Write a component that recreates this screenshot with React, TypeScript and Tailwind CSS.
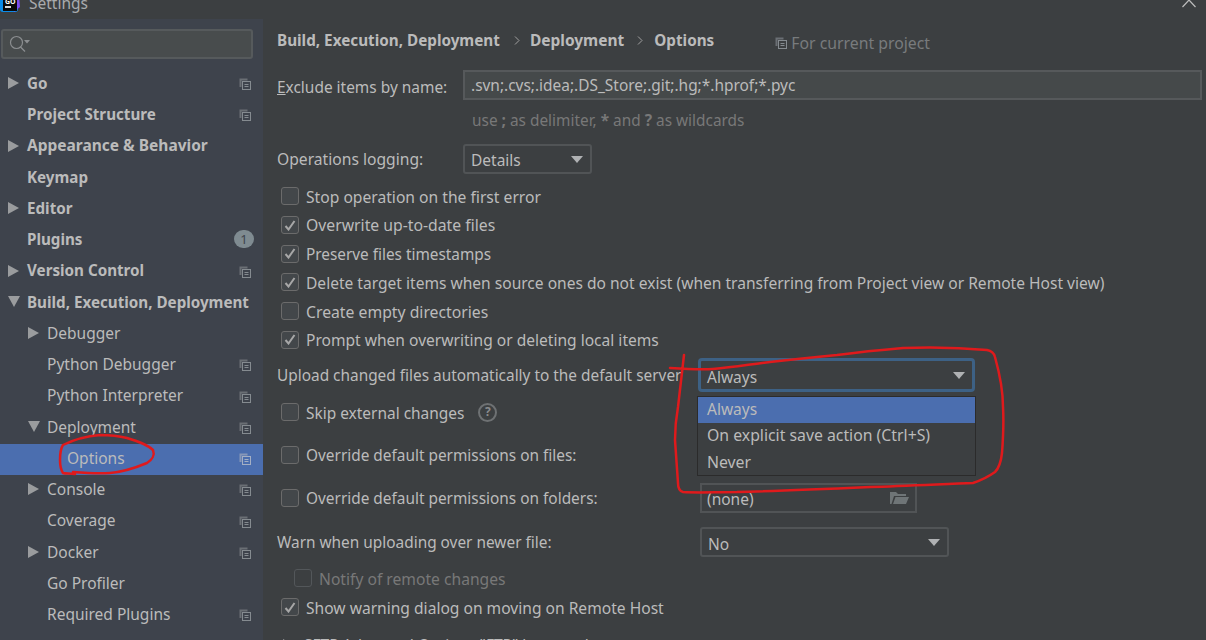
import React from "react";

const Copy = ({ light = false }: { light?: boolean }) => (
  <svg width="12" height="12" viewBox="0 0 12 12" className="shrink-0" fill="none" stroke={light ? "#a4afc4" : "#858b90"} strokeWidth="1">
    <path d="M0.5 0.5H8.5V2.5H2.5V9H0.5Z" fill={light ? "#8797b8" : "#6a6f74"} stroke="none" />
    <rect x="3.5" y="3.5" width="8" height="8" />
    <path d="M5.5 6.5H9.5M5.5 8.5H9.5" />
  </svg>
);

const TriRight = () => (
  <svg width="11" height="12" viewBox="0 0 11 12" className="shrink-0"><path d="M0 0L11 6L0 12Z" fill="#9a9c9e" /></svg>
);
const TriDown = () => (
  <svg width="12" height="11" viewBox="0 0 12 11" className="shrink-0"><path d="M0 0H12L6 11Z" fill="#9a9c9e" /></svg>
);
const Arrow = () => (
  <svg width="12" height="7" viewBox="0 0 12 7" className="shrink-0"><path d="M0 0H12L6 7Z" fill="#afb1b3" /></svg>
);

type Item = { t: string; lv: 0 | 1 | 2; tri?: "r" | "d"; size?: string; copy?: boolean; badge?: boolean; sel?: boolean };
const bold = "font-bold text-[15.2px]";
const items: Item[] = [
  { t: "Go", lv: 0, tri: "r", size: bold, copy: true },
  { t: "Project Structure", lv: 0, size: bold, copy: true },
  { t: "Appearance & Behavior", lv: 0, tri: "r", size: "font-bold text-[15.5px]" },
  { t: "Keymap", lv: 0, size: bold },
  { t: "Editor", lv: 0, tri: "r", size: bold },
  { t: "Plugins", lv: 0, size: bold, badge: true },
  { t: "Version Control", lv: 0, tri: "r", size: bold, copy: true },
  { t: "Build, Execution, Deployment", lv: 0, tri: "d", size: bold },
  { t: "Debugger", lv: 1, tri: "r" },
  { t: "Python Debugger", lv: 1, copy: true },
  { t: "Python Interpreter", lv: 1, copy: true },
  { t: "Deployment", lv: 1, tri: "d", copy: true },
  { t: "Options", lv: 2, copy: true, sel: true },
  { t: "Console", lv: 1, tri: "r", copy: true },
  { t: "Coverage", lv: 1, copy: true },
  { t: "Docker", lv: 1, tri: "r", copy: true },
  { t: "Go Profiler", lv: 1 },
  { t: "Required Plugins", lv: 1, copy: true },
];

const TreeRow = ({ it }: { it: Item }) => (
  <div className={`h-[31.25px] shrink-0 flex items-center relative pr-[12px] ${it.sel ? "bg-[#4b6eaf]" : ""}`}>
    {it.tri && (
      <span className={`absolute top-[8px] ${it.lv === 0 ? "left-[8px]" : "left-[28px]"}`}>
        {it.tri === "r" ? <TriRight /> : <TriDown />}
      </span>
    )}
    <span
      className={`-mt-[3.5px] flex-1 whitespace-nowrap ${it.lv === 0 ? "pl-[27px]" : it.lv === 1 ? "pl-[47px]" : "pl-[67px]"} ${it.size ?? "text-[15.5px]"}`}
    >
      {it.t}
    </span>
    {it.copy && <span className="-mt-[1px]"><Copy light={it.sel} /></span>}
    {it.badge && (
      <span className="-mr-[3px] -mt-[3px] w-[20px] h-[18px] rounded-full bg-[#7f8b91] text-[#3e434c] text-[13px] flex items-center justify-center">1</span>
    )}
  </div>
);

const Check = ({ on = false, dim = false }: { on?: boolean; dim?: boolean }) => (
  <span className={`w-[18px] h-[18px] shrink-0 rounded-[3px] border flex items-center justify-center ${dim ? "border-[#53575a] bg-[#3c3f41]" : "border-[#6b6b6b] bg-[#43474a]"}`}>
    {on && (
      <svg width="12" height="11" viewBox="0 0 12 11" fill="none" stroke="#a7a7a7" strokeWidth="2"><path d="M1.5 6L4.5 9.5L10.5 1" /></svg>
    )}
  </span>
);

const CheckRow = ({ on, children, cls = "h-[28.7px]", size = "text-[15.45px]" }: { on?: boolean; children: React.ReactNode; cls?: string; size?: string }) => (
  <div className={`flex items-center shrink-0 pl-[4px] gap-[7px] whitespace-nowrap ${cls}`}>
    <Check on={on} />
    <span className={`mt-[0.5px] ${size}`}>{children}</span>
  </div>
);

const Combo = ({ text, cls, offset = "mt-[1px]" }: { text: string; cls: string; offset?: string }) => (
  <div className={`h-[30px] shrink-0 rounded-[3px] border-2 border-[#515456] bg-[#3c3f41] flex items-center justify-between pl-[6px] pr-[7px] ${cls}`}>
    <span className={`${offset} text-[15.5px]`}>{text}</span>
    <Arrow />
  </div>
);

export default function App() {
  return (
    <div className="relative w-[1206px] h-[640px] overflow-hidden bg-[#3c3f41] text-[#bbbbbb] text-[15px] leading-[20px] font-['Noto_Sans',sans-serif] flex flex-col">
      {/* title bar */}
      <div className="h-[19px] shrink-0 bg-[#3c3f41] flex items-start justify-between overflow-hidden">
        <div className="flex items-start -mt-[7px]">
          <svg width="20" height="20" viewBox="0 0 20 20" className="shrink-0">
            <rect x="0" y="2" width="18" height="17" rx="3" fill="#0b8be6" />
            <path d="M12 2H19L20 14L14 19Z" fill="#7c4df0" />
            <rect x="3" y="3" width="14" height="15" fill="#0a0a0a" />
            <rect x="5" y="13" width="6" height="2" fill="#d8d8d8" />
            <text x="5" y="11" fontSize="7" fill="#ffffff" fontWeight="700">GO</text>
          </svg>
          <span className="ml-[9px] text-[#a9abad] text-[15.5px]">Settings</span>
        </div>
        <svg width="14" height="8" viewBox="0 0 14 8" className="mr-[10px]" fill="none" stroke="#bdbdbd" strokeWidth="1.2"><path d="M0.5 7L7 0L13.5 7" /></svg>
      </div>

      <div className="flex flex-1 min-h-0">
        {/* sidebar */}
        <aside className="w-[263px] shrink-0 bg-[#3e434c] flex flex-col overflow-hidden">
          <div className="mt-[10px] ml-[1px] w-[252px] h-[30px] shrink-0 rounded-[3px] border-2 border-[#565a5c] bg-[#484c4d] flex items-center pl-[6px]">
            <svg width="22" height="18" viewBox="0 0 22 18" fill="none" stroke="#8b8e90" strokeWidth="1.2">
              <circle cx="7.5" cy="7.5" r="6" />
              <path d="M11.5 12L16 16.5" />
              <path d="M15 5H21L18 8.5Z" fill="#8b8e90" stroke="none" />
            </svg>
          </div>
          <div className="mt-[10px] flex flex-col">
            {items.map((it) => <TreeRow key={it.t} it={it} />)}
          </div>
        </aside>

        {/* content */}
        <main className="flex-1 min-w-0 pl-[14px] pr-[4px] flex flex-col overflow-hidden">
          <div className="mt-[11px] h-[20px] shrink-0 flex items-center whitespace-nowrap">
            <span className="font-bold text-[15.25px]">Build, Execution, Deployment</span>
            <svg width="6" height="9" viewBox="0 0 6 9" className="ml-[14px] mr-[10px]" fill="none" stroke="#a0a0a0"><path d="M1 0.5L5 4.5L1 8.5" /></svg>
            <span className="font-bold text-[15.5px]">Deployment</span>
            <svg width="6" height="9" viewBox="0 0 6 9" className="ml-[13px] mr-[11px]" fill="none" stroke="#a0a0a0"><path d="M1 0.5L5 4.5L1 8.5" /></svg>
            <span className="font-bold text-[15.25px]">Options</span>
            <span className="ml-[61px] mt-[5px]"><Copy /></span>
            <span className="ml-[4px] mt-[6px] text-[#787b7d] text-[15.8px]">For current project</span>
          </div>

          <div className="mt-[20px] h-[30px] shrink-0 flex items-center">
            <span className="w-[186px] shrink-0 mt-[4px] text-[15.45px]"><u>E</u>xclude items by name:</span>
            <div className="flex-1 h-[30px] border-2 border-[#56595b] bg-[#45494a] flex items-center pl-[6px] text-[15.45px]">.svn;.cvs;.idea;.DS_Store;.git;.hg;*.hprof;*.pyc</div>
          </div>

          <div className="mt-[10px] h-[20px] shrink-0 pl-[195px] pt-[1px] text-[#787878] text-[15.4px]">
            use <b>;</b> as delimiter, <b>*</b> and <b>?</b> as wildcards
          </div>

          <div className="mt-[14px] h-[30px] shrink-0 flex items-center">
            <span className="w-[186px] shrink-0 text-[15.65px]">Operations logging:</span>
            <Combo text="Details" cls="w-[129px]" />
          </div>

          <div className="mt-[8px] flex flex-col shrink-0">
            <CheckRow size="text-[15.65px]">Stop operation on the first error</CheckRow>
            <CheckRow on size="text-[15.75px]">Overwrite up-to-date files</CheckRow>
            <CheckRow on size="text-[15.35px]">Preserve files timestamps</CheckRow>
            <CheckRow on size="text-[15.57px]">Delete target items when source ones do not exist (when transferring from Project view or Remote Host view)</CheckRow>
            <CheckRow size="text-[15.75px] pt-[2px]">Create empty directories</CheckRow>
            <CheckRow on size="text-[15.57px]">Prompt when overwriting or deleting local items</CheckRow>
          </div>

          <div className="mt-[4px] h-[34px] shrink-0 flex items-center">
            <span className="w-[421px] shrink-0 whitespace-nowrap mt-[2px] text-[15.4px]">Upload changed files automatically to the default server</span>
            <div className="w-[277px] h-[34px] rounded-[4px] border-[3px] border-[#3d6185] bg-[#3c3f41] flex items-center justify-between pl-[6px] pr-[7px]">
              <span className="mt-[3px] text-[15.5px]">Always</span>
              <Arrow />
            </div>
          </div>

          <CheckRow cls="mt-[9px] h-[22px]">
            <span className="flex items-center">
              <span className="mt-[2px]">Skip external changes</span>
              <span className="ml-[14px] w-[19px] h-[19px] rounded-full border-2 border-[#6e7173] text-[#8a8c8e] text-[12px] font-bold flex items-center justify-center">?</span>
            </span>
          </CheckRow>

          <CheckRow cls="mt-[21px] h-[22px]" size="text-[15.4px] pt-[2px]">Override default permissions on files:</CheckRow>

          <div className="mt-[17px] h-[30px] shrink-0 flex items-center">
            <div className="w-[423px] shrink-0"><CheckRow size="text-[15.4px] pt-[2px]">Override default permissions on folders:</CheckRow></div>
            <div className="w-[217px] h-[30px] border-2 border-[#515456] flex items-center justify-between pl-[5px] pr-[6px]">
              <span className="mt-[2px] text-[15.5px]">(none)</span>
              <svg width="19" height="14" viewBox="0 0 19 14"><path d="M0 13V1H6L8 3H16V5H4L1.5 13Z M3 13L5.5 6H19L16 13Z" fill="#6f7577" /></svg>
            </div>
          </div>

          <div className="mt-[14px] h-[30px] shrink-0 flex items-center">
            <span className="w-[423px] shrink-0 mt-[2px] text-[15.4px]">Warn when uploading over newer file:</span>
            <Combo text="No" cls="w-[249px]" offset="mt-[3px]" />
          </div>

          <div className="mt-[10px] h-[22px] shrink-0 flex items-center pl-[17px] gap-[7px] text-[#787878]">
            <Check dim />
            <span className="mt-[1px] text-[15.65px]">Notify of remote changes</span>
          </div>

          <CheckRow on cls="mt-[7px] h-[22px]" size="text-[15.6px] pt-[2px]">Show warning dialog on moving on Remote Host</CheckRow>

          <div className="mt-[16px] h-[22px] shrink-0 flex items-center pl-[6px] gap-[10px] whitespace-nowrap">
            <span className="shrink-0 w-[11px]"><TriRight /></span>
            <span className="text-[15.5px]">SFTP Advanced Options "FTP" hosts only</span>
          </div>
        </main>
      </div>

      {/* open combo popup */}
      <div className="absolute left-[697px] top-[396px] w-[279px] h-[80px] bg-[#3c3f41] border border-[#2b2b2b] flex flex-col">
        <div className="h-[26px] bg-[#4b6eaf] pl-[9px] flex items-center pb-[2px] text-[15.5px]">Always</div>
        <div className="h-[26.5px] pl-[9px] flex items-center pb-[2px] text-[15.8px]">On explicit save action (Ctrl+S)</div>
        <div className="h-[26.5px] pl-[9px] flex items-center text-[15.8px]">Never</div>
      </div>

      {/* red pen annotations */}
      <svg className="absolute inset-0 pointer-events-none" width="1206" height="640" viewBox="0 0 1206 640" fill="none" stroke="#df1a1c" strokeWidth="2.5" strokeLinecap="round">
        <path d="M670 368C685 369 700 370 713 369C735 367 752 364 770 362C795 359 815 357 837 355C860 352 880 350 903 348C930 347 965 348 987 350C992 351 994 353 995 357C1000 375 1003 390 1003 407C1004 425 1003 440 1002 453C1001 462 999 468 995 472C988 477 982 480 973 483C945 484 905 486 870 487C825 489 780 491 737 492C715 492 698 493 683 492C679 491 678 488 678 483C677 470 676 455 675 440C675 428 676 418 678 407C680 390 682 372 684 355" />
        <path d="M75 474C70 473 66 474 63 473C61 470 60 465 60 460C60 453 61 448 63 445C75 439 88 436 100 435C110 435 119 436 127 438C137 441 147 444 153 450C155 455 152 460 147 463C135 468 122 472 110 473C98 474 85 473 73 472" />
      </svg>
    </div>
  );
}
